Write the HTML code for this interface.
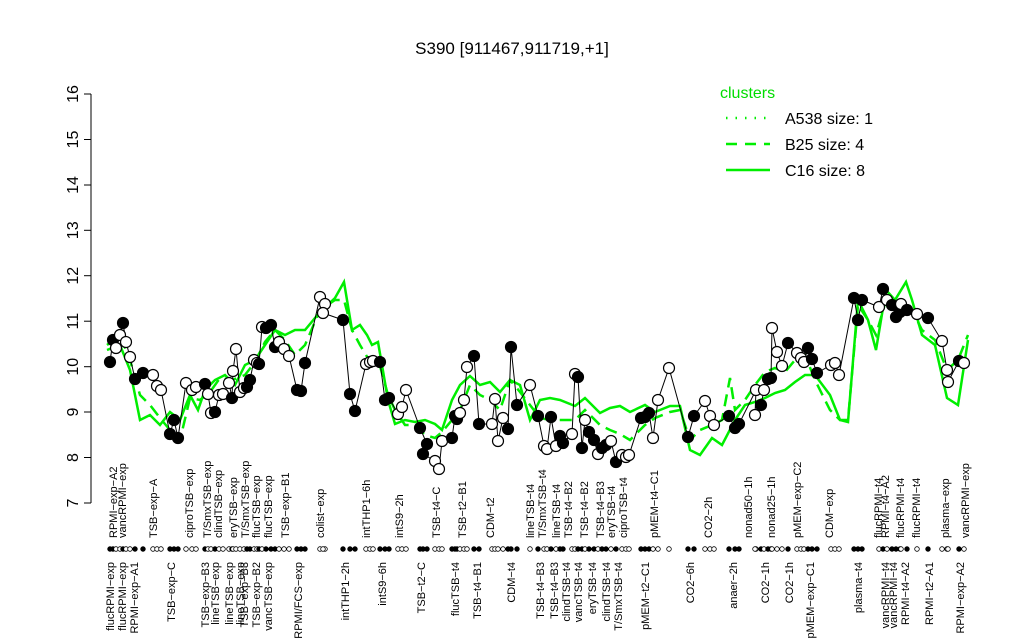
<!DOCTYPE html>
<html><head><meta charset="utf-8"><style>
html,body{margin:0;padding:0;background:#fff;}
svg{display:block;font-family:"Liberation Sans",sans-serif;}
</style></head><body>
<svg id="s" width="1024" height="640" viewBox="0 0 1024 640" xmlns="http://www.w3.org/2000/svg">
<rect width="1024" height="640" fill="#fff"/>
<text x="512" y="54" font-size="17" text-anchor="middle">S390 [911467,911719,+1]</text>
<g stroke="#000" stroke-width="1" fill="none">
<line x1="91" y1="94" x2="91" y2="503"/>
<line x1="84" y1="94" x2="91" y2="94"/><line x1="84" y1="139.5" x2="91" y2="139.5"/>
<line x1="84" y1="185" x2="91" y2="185"/><line x1="84" y1="230.3" x2="91" y2="230.3"/>
<line x1="84" y1="275.7" x2="91" y2="275.7"/><line x1="84" y1="321.2" x2="91" y2="321.2"/>
<line x1="84" y1="366.7" x2="91" y2="366.7"/><line x1="84" y1="412" x2="91" y2="412"/>
<line x1="84" y1="457.5" x2="91" y2="457.5"/><line x1="84" y1="503" x2="91" y2="503"/>
</g>
<g font-size="16" text-anchor="middle">
<text transform="translate(78,503) rotate(-90)">7</text>
<text transform="translate(78,457.5) rotate(-90)">8</text>
<text transform="translate(78,412) rotate(-90)">9</text>
<text transform="translate(78,366.7) rotate(-90)">10</text>
<text transform="translate(78,321.2) rotate(-90)">11</text>
<text transform="translate(78,275.7) rotate(-90)">12</text>
<text transform="translate(78,230.3) rotate(-90)">13</text>
<text transform="translate(78,185) rotate(-90)">14</text>
<text transform="translate(78,139.5) rotate(-90)">15</text>
<text transform="translate(78,94) rotate(-90)">16</text>
</g>
<text x="720" y="98" font-size="16" fill="#00dd00">clusters</text>
<line x1="726" y1="118" x2="770" y2="118" stroke="#00ee00" stroke-width="2.5" stroke-dasharray="1.5,8"/>
<line x1="726" y1="144" x2="770" y2="144" stroke="#00ee00" stroke-width="2.5" stroke-dasharray="11,8"/>
<line x1="726" y1="170" x2="770" y2="170" stroke="#00ee00" stroke-width="2.5"/>
<g font-size="16"><text x="785" y="124">A538 size: 1</text><text x="785" y="150">B25 size: 4</text><text x="785" y="176">C16 size: 8</text></g>
<polyline fill="none" stroke="#00ee00" stroke-width="2.5" stroke-dasharray="12,7" points="107,345 120,335 130,360 140,395 150,405 160,418 170,430 180,440 190,398 200,400 210,392 220,378 232,380 245,375 255,362 265,342 275,330 285,340 295,355 305,345 320,310 335,300 344,300 352,330 360,345 372,365 380,366 388,395 395,410 405,425 415,425 425,435 435,438 442,432 452,420 460,410 470,385 480,395 490,400 500,410 510,380 520,392 530,405 540,418 550,420 560,420 575,420 585,410 600,425 610,430 620,434 630,440 645,425 655,418 670,412 680,410 690,440 700,430 712,425 722,420 730,378 735,410 745,400 755,385 765,372 775,368 785,372 795,360 805,355 815,380 830,410 840,420 848,420 858,305 868,320 876,335 886,300 900,305 906,300 912,310 922,330 935,340 947,370 958,360 968,335"/>
<polyline fill="none" stroke="#00ee00" stroke-width="2.5" points="107,350 120,345 130,370 140,420 150,415 160,425 170,412 180,420 190,395 198,410 205,390 215,380 225,375 235,385 245,365 255,360 265,345 275,330 285,335 295,330 305,330 320,312 335,298 344,282 352,330 360,325 367,335 372,345 378,342 388,400 395,424 405,420 415,422 425,420 435,424 442,430 452,400 460,385 470,376 480,385 490,382 500,392 510,380 520,385 530,420 540,400 550,398 560,400 575,406 585,398 600,413 610,408 620,406 630,412 645,405 655,412 670,406 680,406 690,450 700,455 712,438 722,445 735,420 745,405 755,402 765,398 775,393 785,390 795,382 805,375 815,375 830,395 840,420 848,422 858,300 868,320 876,350 886,290 895,300 906,282 912,300 922,335 935,345 947,398 958,405 968,340"/>
<g id="pts"></g>
<g font-size="11" text-anchor="start">
<text transform="translate(117,538) rotate(-90)">RPMI−exp−A2</text>
<text transform="translate(126,538) rotate(-90)">vancRPMI−exp</text>
<text transform="translate(157,538) rotate(-90)">TSB−exp−A</text>
<text transform="translate(193,538) rotate(-90)">ciproTSB−exp</text>
<text transform="translate(211,538) rotate(-90)">T/SmxTSB−exp</text>
<text transform="translate(222,538) rotate(-90)">clindTSB−exp</text>
<text transform="translate(237,538) rotate(-90)">eryTSB−exp</text>
<text transform="translate(249,538) rotate(-90)">T/SmxTSB−exp</text>
<text transform="translate(260,538) rotate(-90)">flucTSB−exp</text>
<text transform="translate(272,538) rotate(-90)">flucTSB−exp</text>
<text transform="translate(289,538) rotate(-90)">TSB−exp−B1</text>
<text transform="translate(324,538) rotate(-90)">colist−exp</text>
<text transform="translate(370,538) rotate(-90)">intTHP1−6h</text>
<text transform="translate(403,538) rotate(-90)">intS9−2h</text>
<text transform="translate(440,538) rotate(-90)">TSB−t4−C</text>
<text transform="translate(466,538) rotate(-90)">TSB−t2−B1</text>
<text transform="translate(494,538) rotate(-90)">CDM−t2</text>
<text transform="translate(534,538) rotate(-90)">lineTSB−t4</text>
<text transform="translate(546,538) rotate(-90)">T/SmxTSB−t4</text>
<text transform="translate(560,538) rotate(-90)">lineTSB−t4</text>
<text transform="translate(572,538) rotate(-90)">TSB−t4−B2</text>
<text transform="translate(588,538) rotate(-90)">TSB−t4−B2</text>
<text transform="translate(604,538) rotate(-90)">TSB−t4−B3</text>
<text transform="translate(615,538) rotate(-90)">eryTSB−t4</text>
<text transform="translate(627,538) rotate(-90)">ciproTSB−t4</text>
<text transform="translate(658,538) rotate(-90)">pMEM−t4−C1</text>
<text transform="translate(712,538) rotate(-90)">CO2−2h</text>
<text transform="translate(752,538) rotate(-90)">nonad50−1h</text>
<text transform="translate(775,538) rotate(-90)">nonad25−1h</text>
<text transform="translate(801,538) rotate(-90)">pMEM−exp−C2</text>
<text transform="translate(833,538) rotate(-90)">CDM−exp</text>
<text transform="translate(882,538) rotate(-90)">flucRPMI−t4</text>
<text transform="translate(889,538) rotate(-90)">RPMI−t4−A2</text>
<text transform="translate(904,538) rotate(-90)">flucRPMI−t4</text>
<text transform="translate(920,538) rotate(-90)">flucRPMI−t4</text>
<text transform="translate(949,538) rotate(-90)">plasma−exp</text>
<text transform="translate(969,538) rotate(-90)">vancRPMI−exp</text>
</g>
<g font-size="11" text-anchor="end">
<text transform="translate(114,562) rotate(-90)">flucRPMI−exp</text>
<text transform="translate(126,562) rotate(-90)">flucRPMI−exp</text>
<text transform="translate(138,562) rotate(-90)">RPMI−exp−A1</text>
<text transform="translate(175,562) rotate(-90)">TSB−exp−C</text>
<text transform="translate(209,562) rotate(-90)">TSB−exp−B3</text>
<text transform="translate(219,562) rotate(-90)">lineTSB−exp</text>
<text transform="translate(233,562) rotate(-90)">lineTSB−exp</text>
<text transform="translate(244,562) rotate(-90)">lineTSB−exp</text>
<text transform="translate(248,562) rotate(-90)">TSB−exp−B3</text>
<text transform="translate(260,562) rotate(-90)">TSB−exp−B2</text>
<text transform="translate(272,562) rotate(-90)">vancTSB−exp</text>
<text transform="translate(302,562) rotate(-90)">RPMI/FCS−exp</text>
<text transform="translate(349,562) rotate(-90)">intTHP1−2h</text>
<text transform="translate(386,562) rotate(-90)">intS9−6h</text>
<text transform="translate(425,562) rotate(-90)">TSB−t2−C</text>
<text transform="translate(459,562) rotate(-90)">flucTSB−t4</text>
<text transform="translate(481,562) rotate(-90)">TSB−t4−B1</text>
<text transform="translate(515,562) rotate(-90)">CDM−t4</text>
<text transform="translate(544,562) rotate(-90)">TSB−t4−B3</text>
<text transform="translate(558,562) rotate(-90)">TSB−t4−B3</text>
<text transform="translate(570,562) rotate(-90)">clindTSB−t4</text>
<text transform="translate(582,562) rotate(-90)">vancTSB−t4</text>
<text transform="translate(596,562) rotate(-90)">eryTSB−t4</text>
<text transform="translate(610,562) rotate(-90)">clindTSB−t4</text>
<text transform="translate(622,562) rotate(-90)">T/SmxTSB−t4</text>
<text transform="translate(649,562) rotate(-90)">pMEM−t2−C1</text>
<text transform="translate(694,562) rotate(-90)">CO2−6h</text>
<text transform="translate(737,562) rotate(-90)">anaer−2h</text>
<text transform="translate(769,562) rotate(-90)">CO2−1h</text>
<text transform="translate(793,562) rotate(-90)">CO2−1h</text>
<text transform="translate(814,562) rotate(-90)">pMEM−exp−C1</text>
<text transform="translate(862,562) rotate(-90)">plasma−t4</text>
<text transform="translate(889,562) rotate(-90)">vancRPMI−t4</text>
<text transform="translate(897,562) rotate(-90)">vancRPMI−t4</text>
<text transform="translate(909,562) rotate(-90)">RPMI−t4−A2</text>
<text transform="translate(933,562) rotate(-90)">RPMI−t2−A1</text>
<text transform="translate(964,562) rotate(-90)">RPMI−exp−A2</text>
</g>
</svg>
<script>
var P=[[110,362,1],[113,340,1],[116,348,0],[120,335,0],[123,323,1],[126,342,0],[130,357,0],[135,379,1],[143,373,1],[153,375,0],[157,386,0],[161,390,0],[170,434,1],[174,420,1],[178,438,1],[186,383,0],[192,390,0],[196,387,0],[205,384,1],[208,394,0],[211,413,0],[215,412,1],[219,395,0],[223,394,0],[229,383,0],[232,398,1],[233,371,0],[236,349,0],[240,392,0],[244,388,0],[247,387,1],[250,380,1],[254,360,0],[257,363,0],[259,364,1],[262,327,0],[266,328,1],[271,325,1],[275,347,1],[279,342,0],[284,349,0],[289,356,0],[297,390,1],[301,391,1],[305,363,1],[320,297,0],[325,304,0],[323,313,0],[343,320,1],[350,394,1],[355,411,1],[366,364,0],[370,362,0],[373,361,0],[380,362,1],[385,400,1],[389,398,1],[398,414,0],[402,407,0],[406,390,0],[420,428,1],[427,444,1],[423,454,1],[435,461,0],[439,469,0],[442,441,0],[452,438,1],[455,416,1],[457,419,1],[460,413,0],[464,400,0],[467,367,0],[474,356,1],[479,424,1],[492,424,0],[495,399,0],[498,441,0],[503,418,0],[508,429,1],[511,347,1],[517,405,1],[530,385,0],[538,416,1],[544,446,0],[547,449,0],[551,417,1],[556,446,0],[560,436,1],[563,443,1],[572,434,0],[575,374,0],[578,377,1],[582,448,1],[585,420,0],[589,432,1],[594,440,1],[598,454,0],[602,448,1],[606,445,1],[611,441,0],[616,462,1],[622,455,0],[626,457,0],[629,455,0],[641,418,1],[645,417,1],[649,413,1],[653,438,0],[658,400,0],[669,368,0],[688,437,1],[694,416,1],[705,401,0],[710,416,0],[714,425,0],[729,416,1],[735,428,1],[739,424,1],[756,390,0],[755,415,0],[761,405,1],[764,390,0],[768,379,1],[771,378,1],[772,328,0],[777,352,0],[782,366,0],[788,343,1],[797,353,0],[801,358,0],[804,362,0],[808,348,1],[812,359,1],[817,373,1],[831,365,0],[835,363,0],[839,375,0],[854,298,1],[858,320,1],[862,300,1],[879,307,0],[883,289,1],[887,300,0],[892,305,1],[896,317,1],[900,312,1],[901,304,0],[907,310,1],[917,314,0],[928,318,1],[942,341,0],[947,370,0],[948,382,0],[959,361,1],[964,363,0]];
var g=document.getElementById('pts'),ns='http://www.w3.org/2000/svg';
var pl=document.createElementNS(ns,'polyline');
pl.setAttribute('points',P.map(function(p){return p[0]+','+p[1]}).join(' '));
pl.setAttribute('fill','none');pl.setAttribute('stroke','#000');pl.setAttribute('stroke-width','1');
g.appendChild(pl);
P.forEach(function(p){
 var c=document.createElementNS(ns,'circle');
 c.setAttribute('cx',p[0]);c.setAttribute('cy',p[1]);c.setAttribute('r',5.5);
 c.setAttribute('fill',p[2]?'#000':'#fff');c.setAttribute('stroke','#000');c.setAttribute('stroke-width','1.2');
 g.appendChild(c);
 var d=document.createElementNS(ns,'circle');
 d.setAttribute('cx',p[0]);d.setAttribute('cy',549);d.setAttribute('r',2.3);
 d.setAttribute('fill',p[2]?'#000':'#fff');d.setAttribute('stroke','#000');d.setAttribute('stroke-width','0.8');
 g.appendChild(d);
});
</script>
</body></html>
